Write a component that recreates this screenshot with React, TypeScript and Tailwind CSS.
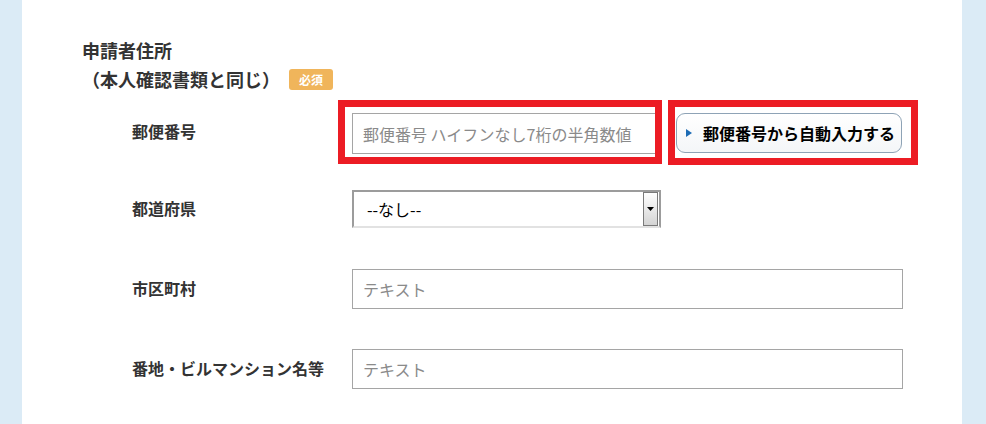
import React from "react";

const jp = { fontFamily: '"Noto Sans CJK JP", "Noto Sans", sans-serif' };

export default function App() {
  return (
    <div className="w-full h-[424px] bg-[#dbebf6] flex overflow-hidden" style={jp}>
      <div className="ml-[22px] w-[940px] h-[424px] bg-white shrink-0">
        {/* Heading */}
        <div className="pl-[60px] pt-[36px] text-[18px] leading-[29px] font-bold text-[#333]">
          <div>申請者住所</div>
          <div className="flex items-center">
            <span>（本人確認書類と同じ）</span>
            <span className="ml-[9px] w-[44px] h-[21px] rounded-[3px] bg-[#f0b55b] text-white text-[12px] leading-[21px] font-bold flex items-center justify-center">
              必須
            </span>
          </div>
        </div>

        {/* Row 1: postal code */}
        <div className="mt-[6px] pl-[110px] flex items-center">
          <div className="w-[206px] shrink-0 text-[16px] font-bold text-[#333] -mt-[4px]">郵便番号</div>
          <div className="flex">
            <div className="w-[324px] h-[64px] border-[7px] border-[#ec1c24] overflow-hidden pl-[7px] pt-[6px]">
              <div className="w-[330px] h-[41px] border border-[#a5a5a5] flex items-center pl-[10px] text-[16px] text-[#8a8a8a] whitespace-nowrap">
                郵便番号 ハイフンなし7桁の半角数値
              </div>
            </div>
            <div className="ml-[6px] w-[250px] h-[65px] border-[7px] border-[#ec1c24] flex items-center pl-[1px]">
              <div className="w-[226px] h-[40px] rounded-[9px] border border-[#8ea3b6] bg-gradient-to-b from-white to-[#f4f6f8] flex items-center pl-[9px] whitespace-nowrap">
                <svg width="6" height="8" viewBox="0 0 6 8" className="shrink-0">
                  <polygon points="0,0 6,4 0,8" fill="#1d6cb5" />
                </svg>
                <span className="ml-[11px] text-[16px] font-bold text-black">郵便番号から自動入力する</span>
              </div>
            </div>
          </div>
        </div>

        {/* Row 2: prefecture */}
        <div className="mt-[25px] pl-[110px] flex items-center">
          <div className="w-[220px] shrink-0 text-[16px] font-bold text-[#333] -mt-[3px]">都道府県</div>
          <div className="w-[309px] h-[38px] border-2 border-[#9c9c9c] border-b-[#e2e2e2] flex items-center justify-between">
            <span className="pl-[13px] text-[16px] text-black">--なし--</span>
            <div className="w-[15px] h-[34px] mr-[1px] border border-[#7a7a7a] bg-gradient-to-b from-white to-[#d4d4d4] flex items-center justify-center">
              <svg width="7" height="4" viewBox="0 0 7 4">
                <polygon points="0,0 7,0 3.5,4" fill="#000" />
              </svg>
            </div>
          </div>
        </div>

        {/* Row 3: city */}
        <div className="mt-[41px] pl-[110px] flex items-center">
          <div className="w-[220px] shrink-0 text-[16px] font-bold text-[#333] -mt-[3px]">市区町村</div>
          <div className="w-[551px] h-[40px] border border-[#a5a5a5] flex items-center pl-[10px] text-[16px] text-[#8a8a8a]">
            テキスト
          </div>
        </div>

        {/* Row 4: address */}
        <div className="mt-[40px] pl-[110px] flex items-center">
          <div className="w-[220px] shrink-0 text-[16px] font-bold text-[#333] whitespace-nowrap -mt-[3px]">番地・ビルマンション名等</div>
          <div className="w-[551px] h-[40px] border border-[#a5a5a5] flex items-center pl-[10px] text-[16px] text-[#8a8a8a]">
            テキスト
          </div>
        </div>
      </div>
    </div>
  );
}
